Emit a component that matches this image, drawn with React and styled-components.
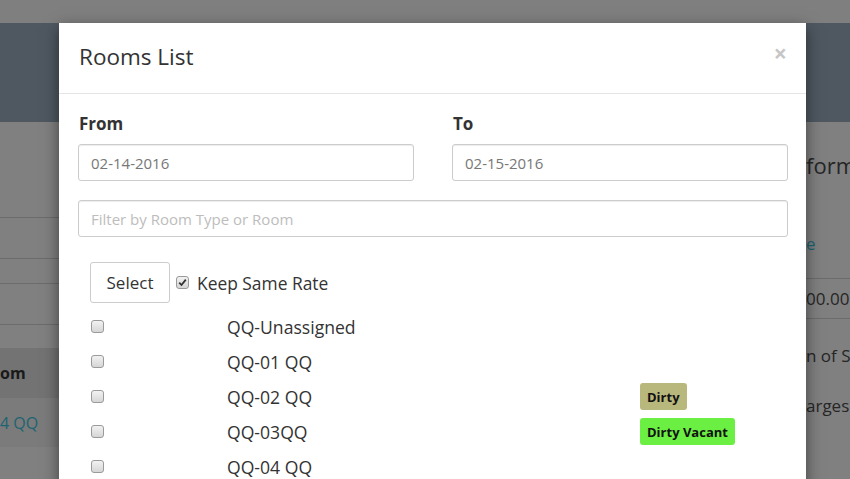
import React from "react";
import styled, { createGlobalStyle } from "styled-components";

const Global = createGlobalStyle`
  html, body { margin: 0; padding: 0; }
  body {
    font-family: "Open Sans", "Liberation Sans", sans-serif;
    overflow: hidden;
    background: #808080;
  }
`;

const Page = styled.div`
  position: relative;
  width: 850px;
  height: 479px;
  overflow: hidden;
  background: #808080;
`;

const TopBar = styled.div`
  height: 23px;
  background: #7f7f7f;
`;

const HeaderBand = styled.div`
  height: 99px;
  background: #4f5861;
`;

const Below = styled.div`
  display: flex;
  justify-content: space-between;
`;

const LeftPane = styled.div`
  width: 60px;
  overflow: hidden;
  display: flex;
  flex-direction: column;
`;

const Rule = styled.div`
  height: ${(p) => p.h}px;
  border-bottom: 1px solid #6c6c6c;
`;

const Gap = styled.div`
  height: ${(p) => p.h}px;
`;

const HeadCell = styled.div`
  height: 50px;
  background: #737373;
  display: flex;
  align-items: center;
  font-weight: 700;
  font-size: 16px;
  color: #1a1a1a;
  white-space: nowrap;
`;

const LinkCell = styled.div`
  height: 49px;
  background: #7b7b7b;
  display: flex;
  align-items: center;
  font-size: 16px;
  color: #1d6472;
  white-space: nowrap;
`;

const RightPane = styled.div`
  width: 44px;
  overflow: hidden;
  display: flex;
  flex-direction: column;
`;

const RightLine = styled.div`
  box-sizing: border-box;
  height: ${(p) => p.h}px;
  display: flex;
  align-items: center;
  font-size: ${(p) => p.fs || 17}px;
  color: ${(p) => p.c || "#262626"};
  white-space: nowrap;
  border-top: ${(p) => (p.rule ? "1px solid #6c6c6c" : "none")};
  border-bottom: ${(p) => (p.rule ? "1px solid #6c6c6c" : "none")};
`;

const Modal = styled.div`
  position: absolute;
  left: 59px;
  top: 23px;
  width: 747px;
  height: 480px;
  background: #fff;
  box-shadow: 0 5px 15px rgba(0, 0, 0, 0.5);
  color: #333;
`;

const ModalHeader = styled.div`
  height: 71px;
  box-sizing: border-box;
  border-bottom: 1px solid #e5e5e5;
  display: flex;
  align-items: center;
  justify-content: space-between;
  padding: 0 18px 0 20px;
`;

const Title = styled.h4`
  margin: 0;
  font-size: 22.5px;
  font-weight: 400;
  color: #333;
  line-height: 1;
  padding-bottom: 1px;
`;

const Close = styled.span`
  font-size: 23px;
  font-weight: 700;
  color: #c6c6c6;
  line-height: 1;
  margin-top: -10px;
  margin-right: 1px;
`;

const ModalBody = styled.div`
  padding: 19px 18px 0 19px;
`;

const DateGrid = styled.div`
  display: grid;
  grid-template-columns: 336px 336px;
  column-gap: 38px;
`;

const Field = styled.div`
  display: flex;
  flex-direction: column;
`;

const Label = styled.label`
  font-size: 17px;
  font-weight: 700;
  line-height: 22px;
  margin: 0 0 9px 1px;
  color: #333;
`;

const Input = styled.div`
  box-sizing: border-box;
  height: 37px;
  border: 1px solid #ccc;
  border-radius: 3px;
  box-shadow: inset 0 1px 1px rgba(0, 0, 0, 0.075);
  display: flex;
  align-items: center;
  padding: 0 12px;
  font-size: 15px;
  color: ${(p) => (p.placeholder ? "#bdbdbd" : "#777")};
  margin-top: ${(p) => p.mt || 0}px;
`;

const List = styled.div`
  padding-left: 12px;
  margin-top: 25px;
`;

const ActionRow = styled.div`
  display: flex;
  align-items: center;
  height: 41px;
  margin-bottom: 6px;
`;

const Button = styled.div`
  box-sizing: border-box;
  width: 80px;
  height: 41px;
  border: 1px solid #ccc;
  border-radius: 3px;
  display: flex;
  align-items: center;
  justify-content: center;
  font-size: 17px;
  color: #333;
  margin-right: 6px;
`;

const Box = styled.span`
  box-sizing: border-box;
  width: 13px;
  height: 13px;
  border: 1px solid #9a9a9a;
  border-radius: 3px;
  background: linear-gradient(#f2f2f2, #d6d6d6);
  display: inline-flex;
  align-items: center;
  justify-content: center;
  flex: none;
  margin-left: ${(p) => p.ml || 0}px;
  margin-right: ${(p) => p.mr || 0}px;
`;

const KeepText = styled.span`
  font-size: 17.4px;
  color: #333;
`;

const RoomRow = styled.div`
  display: grid;
  grid-template-columns: 137px 412px auto;
  align-items: center;
  height: 35px;
`;

const RoomName = styled.span`
  font-size: 17.6px;
  color: #333;
`;

const Badge = styled.span`
  justify-self: start;
  display: inline-flex;
  align-items: center;
  height: 27px;
  padding: 0 7px;
  border-radius: 3px;
  background: ${(p) => p.bg};
  font-size: 13px;
  font-weight: 700;
  color: #111;
  margin-left: 1px;
`;

const Check = () => (
  <svg width="9" height="9" viewBox="0 0 9 9">
    <path d="M1.2 4.6 L3.5 7 L7.8 1.6" fill="none" stroke="#333" strokeWidth="1.8" />
  </svg>
);

const rooms = [
  { name: "QQ-Unassigned" },
  { name: "QQ-01 QQ" },
  { name: "QQ-02 QQ", badge: "Dirty", bg: "#b8b77c" },
  { name: "QQ-03QQ", badge: "Dirty Vacant", bg: "#6cef43" },
  { name: "QQ-04 QQ" },
];

export default function App() {
  return (
    <Page>
      <Global />
      <TopBar />
      <HeaderBand />
      <Below>
        <LeftPane>
          <Rule h={95} />
          <Rule h={40} />
          <Rule h={24} />
          <Rule h={40} />
          <Gap h={23} />
          <HeadCell>om</HeadCell>
          <LinkCell>4 QQ</LinkCell>
        </LeftPane>
        <RightPane>
          <RightLine h={86} fs={22}>form</RightLine>
          <RightLine h={70} c="#1d6472">e</RightLine>
          <RightLine h={41} rule>00.00 )</RightLine>
          <RightLine h={72}>n of S</RightLine>
          <RightLine h={28}>arges</RightLine>
        </RightPane>
      </Below>

      <Modal>
        <ModalHeader>
          <Title>Rooms List</Title>
          <Close>×</Close>
        </ModalHeader>
        <ModalBody>
          <DateGrid>
            <Field>
              <Label>From</Label>
              <Input>02-14-2016</Input>
            </Field>
            <Field>
              <Label>To</Label>
              <Input>02-15-2016</Input>
            </Field>
          </DateGrid>
          <Input placeholder mt={19}>Filter by Room Type or Room</Input>
          <List>
            <ActionRow>
              <Button>Select</Button>
              <Box mr={8}>
                <Check />
              </Box>
              <KeepText>Keep Same Rate</KeepText>
            </ActionRow>
            {rooms.map((r) => (
              <RoomRow key={r.name}>
                <Box ml={1} />
                <RoomName>{r.name}</RoomName>
                {r.badge ? <Badge bg={r.bg}>{r.badge}</Badge> : <span />}
              </RoomRow>
            ))}
          </List>
        </ModalBody>
      </Modal>
    </Page>
  );
}
